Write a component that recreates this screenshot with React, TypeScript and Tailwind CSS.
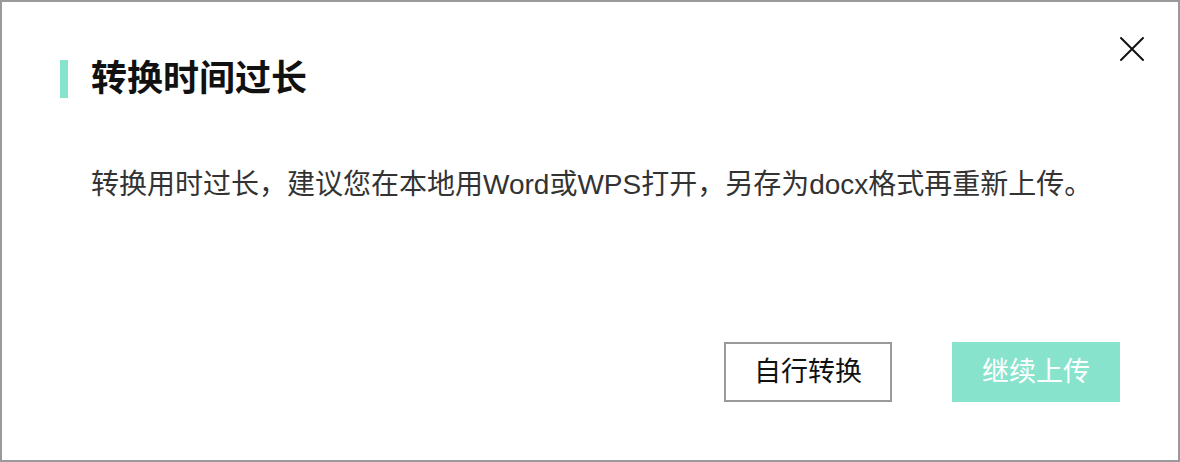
import { useState } from 'react'

const FONT = 'font-["Liberation_Sans","Noto_Sans_CJK_SC",sans-serif]'

function CloseIcon() {
  return (
    <svg width="26" height="26" viewBox="0 0 26 26" fill="none" aria-hidden>
      <path d="M2 2 L24 24 M24 2 L2 24" stroke="#111" strokeWidth="2" strokeLinecap="round" />
    </svg>
  )
}

export default function App() {
  const [open, setOpen] = useState(true)

  return (
    <div className={`${FONT} w-[1180px] h-[462px] bg-white`}>
      {open && (
        <div className="relative w-full h-full border-2 border-[#9a9a9a] bg-white pl-[58px] pr-[58px] pt-[58px]">
          {/* Close */}
          <button
            aria-label="关闭"
            onClick={() => setOpen(false)}
            className="absolute top-[34px] right-[33px] flex items-center justify-center"
          >
            <CloseIcon />
          </button>

          {/* Title */}
          <div className="flex items-center h-[38px]">
            <span className="w-[8px] h-[38px] bg-[#86e3cc]" />
            <h2 className="ml-[23px] text-[36px] leading-[38px] font-bold text-[#111]">转换时间过长</h2>
          </div>

          {/* Body */}
          <p className="mt-[68px] pl-[31px] text-[28px] leading-[38px] text-[#333]">
            转换用时过长，建议您在本地用Word或WPS打开，另存为docx格式再重新上传。
          </p>

          {/* Actions */}
          <div className="mt-[138px] flex justify-end gap-[60px]">
            <button className="w-[168px] h-[60px] border-2 border-[#9a9a9a] bg-white text-[27px] text-[#111]">
              自行转换
            </button>
            <button className="w-[168px] h-[60px] bg-[#88e3cd] text-[27px] text-white">继续上传</button>
          </div>
        </div>
      )}
    </div>
  )
}
